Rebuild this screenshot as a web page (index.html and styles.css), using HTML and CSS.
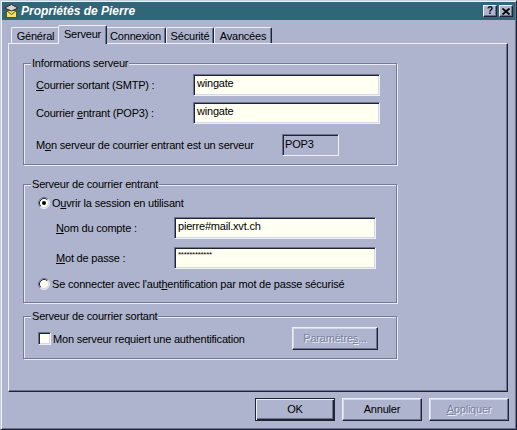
FILE: index.html
```html
<!DOCTYPE html>
<html lang="fr">
<head>
<meta charset="utf-8">
<title>Propriétés de Pierre</title>
<link rel="stylesheet" href="styles.css">
</head>
<body>
<div class="win">
  <div class="titlebar">
    <svg class="ticon" width="16" height="16" viewBox="0 0 16 16">
      <rect x="3.5" y="7.5" width="10" height="7" fill="#f2e26a" stroke="#5d5218"/>
      <polyline points="3.5,7.5 8.5,11.5 13.5,7.5" fill="none" stroke="#5d5218"/>
      <path d="M5 5.5 v2.5 h7 v-2.5 z" fill="#5a5a5a"/>
      <path d="M1.5 5 L8.5 1.5 L15 5 L8.5 8 Z" fill="#d4d4d4" stroke="#2a2a2a"/>
    </svg>
    <span class="ttext">Propriétés de Pierre</span>
    <div class="tbtns">
      <span class="tbtn">?</span>
      <span class="tbtn">
        <svg width="8" height="7" viewBox="0 0 8 7"><path d="M0.5 0.5 L7.5 6.5 M7.5 0.5 L0.5 6.5" stroke="#000" stroke-width="1.8"/></svg>
      </span>
    </div>
  </div>

  <div class="tabs">
    <div class="tab t-gen">Général</div>
    <div class="tab t-srv active">Serveur</div>
    <div class="tab t-cnx">Connexion</div>
    <div class="tab t-sec">Sécurité</div>
    <div class="tab t-av">Avancées</div>
  </div>

  <div class="panel">
    <div class="group g1">
      <div class="legend">Informations serveur</div>
      <div class="grid grid1">
        <div class="lbl"><u>C</u>ourrier sortant (SMTP) :</div>
        <div class="field">wingate</div>
        <div class="lbl">Courrier <u>e</u>ntrant (POP3) :</div>
        <div class="field">wingate</div>
      </div>
      <div class="srvrow">
        <span>M<u>o</u>n serveur de courrier entrant est un serveur</span>
        <span class="ro">POP3</span>
      </div>
    </div>

    <div class="group g2">
      <div class="legend">Serveur de courrier entrant</div>
      <div class="opt">
        <svg class="radio" width="12" height="12" viewBox="0 0 12 12">
          <circle cx="6" cy="6" r="5" fill="#fffff2"/>
          <path d="M9.89 2.11 A5.5 5.5 0 0 0 2.11 9.89" fill="none" stroke="#6c7391"/>
          <path d="M9.89 2.11 A5.5 5.5 0 0 1 2.11 9.89" fill="none" stroke="#eef1f8"/>
          <path d="M9.18 2.82 A4.5 4.5 0 0 0 2.82 9.18" fill="none" stroke="#1e2434"/>
          <path d="M9.18 2.82 A4.5 4.5 0 0 1 2.82 9.18" fill="none" stroke="#d3d8e8"/>
          <circle cx="6" cy="6" r="2" fill="#000"/>
        </svg>
        <span>O<u>u</u>vrir la session en utilisant</span>
      </div>
      <div class="grid grid2">
        <div class="lbl"><u>N</u>om du compte :</div>
        <div class="field">pierre#mail.xvt.ch</div>
        <div class="lbl"><u>M</u>ot de passe :</div>
        <div class="field pwd">************</div>
      </div>
      <div class="opt opt2">
        <svg class="radio" width="12" height="12" viewBox="0 0 12 12">
          <circle cx="6" cy="6" r="5" fill="#fffff2"/>
          <path d="M9.89 2.11 A5.5 5.5 0 0 0 2.11 9.89" fill="none" stroke="#6c7391"/>
          <path d="M9.89 2.11 A5.5 5.5 0 0 1 2.11 9.89" fill="none" stroke="#eef1f8"/>
          <path d="M9.18 2.82 A4.5 4.5 0 0 0 2.82 9.18" fill="none" stroke="#1e2434"/>
          <path d="M9.18 2.82 A4.5 4.5 0 0 1 2.82 9.18" fill="none" stroke="#d3d8e8"/>
        </svg>
        <span>Se connecter avec l'aut<u>h</u>entification par mot de passe sécurisé</span>
      </div>
    </div>

    <div class="group g3">
      <div class="legend">Serveur de courrier sortant</div>
      <div class="authrow">
        <div class="chkwrap">
          <span class="chk"></span>
          <span>Mon serveur requiert une authentification</span>
        </div>
        <div class="btn disabled params">Paramètre<u>s</u>...</div>
      </div>
    </div>
  </div>

  <div class="actions">
    <div class="btn default">OK</div>
    <div class="btn">Annuler</div>
    <div class="btn disabled"><u>A</u>ppliquer</div>
  </div>
</div>
</body>
</html>
```

FILE: styles.css
```css
* { box-sizing: border-box; }
html, body { margin: 0; padding: 0; }
body {
  background: #aeb4cd;
  font-family: "Liberation Sans", Arial, sans-serif;
  font-size: 11px;
  letter-spacing: -0.2px;
  color: #000;
}
u { text-decoration: underline; text-underline-offset: 1px; }

.win {
  width: 517px;
  height: 430px;
  background: #aeb4cd;
  border: 1px solid;
  border-color: #c8cee2 #1e2434 #1e2434 #c8cee2;
  box-shadow: inset 1px 1px #eef1f8, inset -1px -1px #6c7391;
  padding: 1px;
  display: flex;
  flex-direction: column;
}

/* title bar */
.titlebar {
  height: 18px;
  background: #2f6678;
  display: flex;
  align-items: center;
  padding-left: 1px;
}
.ticon { flex: none; }
.ttext {
  margin-left: 2px;
  color: #fff;
  font-weight: bold;
  font-style: italic;
  font-size: 12px;
  letter-spacing: 0;
}
.tbtns {
  margin-left: auto;
  margin-right: 2px;
  display: flex;
  gap: 2px;
}
.tbtn {
  width: 14px;
  height: 12px;
  background: #aeb4cd;
  border: 1px solid;
  border-color: #eef1f8 #1e2434 #1e2434 #eef1f8;
  box-shadow: inset -1px -1px #6c7391;
  display: flex;
  align-items: center;
  justify-content: center;
  font-weight: bold;
  font-size: 10px;
  line-height: 10px;
  letter-spacing: 0;
}

/* tabs */
.tabs {
  margin-top: 5px;
  margin-left: 9px;
  height: 19px;
  margin-bottom: -1px;
  display: flex;
  align-items: flex-end;
}
.tab {
  height: 17px;
  padding-top: 2px;
  line-height: 13px;
  text-align: center;
  background: #aeb4cd;
  border-top: 1px solid #eef1f8;
  border-left: 1px solid #eef1f8;
  border-right: 1px solid #1e2434;
  border-radius: 2px 2px 0 0;
  box-shadow: inset -1px 0 #6c7391;
}
.t-gen { width: 49px; }
.t-srv { width: 45px; }
.t-cnx { width: 61px; }
.t-sec { width: 48px; }
.t-av { width: 58px; }
.tab.active {
  height: 19px;
  width: 49px;
  margin: 0 -2px;
  position: relative;
  z-index: 1;
}
.tab.t-cnx { border-left-color: #eef1f8; }

/* panel */
.panel {
  margin: 0 7px 0 6px;
  height: 349px;
  border: 1px solid;
  border-color: #eef1f8 #1e2434 #1e2434 #eef1f8;
  box-shadow: inset -1px -1px #6c7391;
  padding-left: 14px;
  display: flex;
  flex-direction: column;
}

.group {
  width: 374px;
  border: 1px solid #737b98;
  box-shadow: inset 1px 1px #e8ecf6, 1px 1px #e8ecf6;
  padding: 0 0 0 7px;
}
.legend {
  display: table;
  height: 14px;
  line-height: 14px;
  margin-top: -8px;
  padding: 0 1px;
  background: #aeb4cd;
}
.g1 { margin-top: 19px; padding-bottom: 8px; }
.g2 { margin-top: 19px; padding-bottom: 10px; }
.g3 { margin-top: 13px; padding-bottom: 8px; }

.grid {
  display: grid;
  align-items: center;
}
.grid1 {
  margin: 4px 0 0 5px;
  grid-template-columns: 157px 187px;
  grid-auto-rows: 22px;
  row-gap: 6px;
}
.grid2 {
  margin: 6px 0 0 25px;
  grid-template-columns: 118px 202px;
  grid-auto-rows: 22px;
  row-gap: 8px;
}
.lbl { white-space: nowrap; }

.field {
  height: 22px;
  background: #fffff2;
  border: 1px solid;
  border-color: #6c7391 #eef1f8 #eef1f8 #6c7391;
  box-shadow: inset 1px 1px #1e2434, inset -1px -1px #d3d8e8;
  padding: 2px 3px;
  line-height: 13px;
  white-space: nowrap;
}
.field.pwd {
  font-size: 8px;
  letter-spacing: -0.3px;
  line-height: 9px;
  padding-top: 2px;
}

.srvrow {
  margin: 10px 0 0 5px;
  width: 303px;
  height: 22px;
  display: flex;
  align-items: center;
  justify-content: space-between;
}
.ro {
  width: 57px;
  height: 22px;
  border: 1px solid;
  border-color: #6c7391 #eef1f8 #eef1f8 #6c7391;
  box-shadow: inset 1px 1px #1e2434;
  padding: 3px 2px;
  line-height: 13px;
}

.opt {
  margin: 4px 0 0 7px;
  height: 16px;
  display: flex;
  align-items: center;
  gap: 2px;
}
.opt2 { margin-top: 7px; }
.radio { flex: none; }

.authrow {
  margin: 4px 0 0 7px;
  width: 340px;
  height: 23px;
  display: flex;
  align-items: center;
  justify-content: space-between;
}
.chkwrap {
  display: flex;
  align-items: center;
  gap: 2px;
}
.chk {
  width: 13px;
  height: 13px;
  background: #fffff2;
  border: 1px solid;
  border-color: #6c7391 #eef1f8 #eef1f8 #6c7391;
  box-shadow: inset 1px 1px #1e2434, inset -1px -1px #d3d8e8;
}

/* buttons */
.btn {
  height: 23px;
  width: 80px;
  background: #aeb4cd;
  border: 1px solid;
  border-color: #eef1f8 #1e2434 #1e2434 #eef1f8;
  box-shadow: inset -1px -1px #6c7391, inset 1px 1px #d3d8e8;
  display: flex;
  align-items: center;
  justify-content: center;
  line-height: 13px;
}
.btn.params { width: 86px; }
.btn.default {
  border-color: #1e2434;
  box-shadow: inset 1px 1px #eef1f8, inset -1px -1px #1e2434, inset -2px -2px #6c7391;
}
.btn.disabled {
  color: #7a82a0;
  text-shadow: 1px 1px #eef1f8;
}
.actions {
  margin: 6px 6px 0 0;
  display: flex;
  justify-content: flex-end;
  gap: 7px;
}
```
